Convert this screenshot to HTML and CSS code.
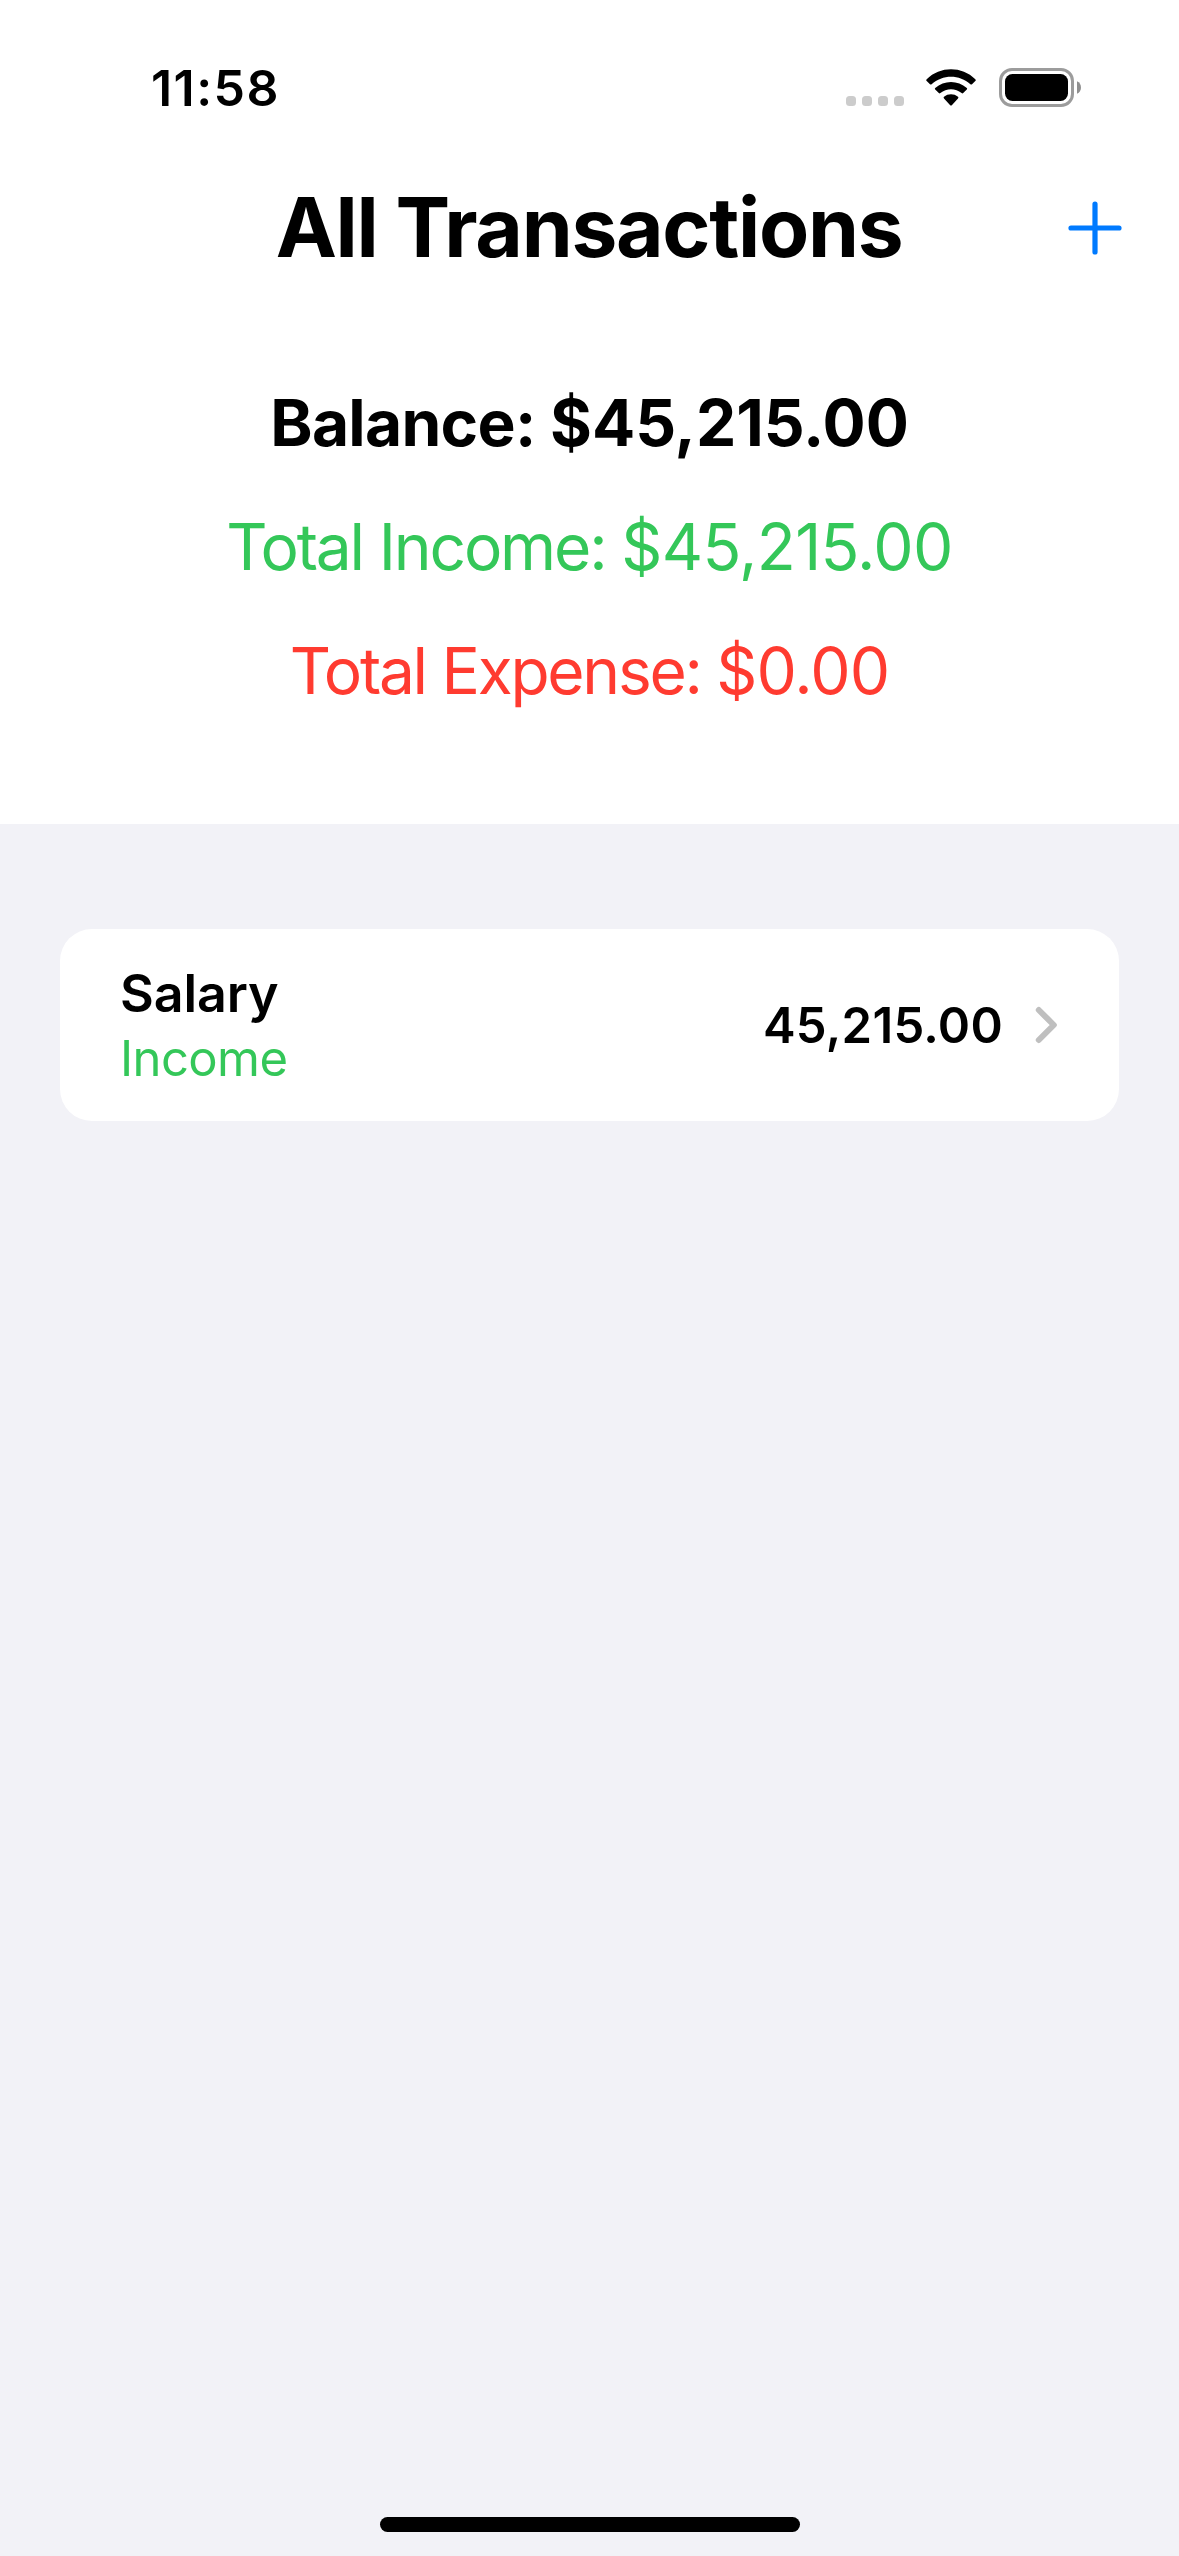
FILE: index.html
```html
<!DOCTYPE html>
<html lang="en">
<head>
<meta charset="utf-8">
<title>All Transactions</title>
<link rel="stylesheet" href="styles.css">
</head>
<body>
<div class="screen">
  <div class="status-bar">
    <span class="time">11:58</span>
    <div class="status-icons">
      <div class="signal"><i></i><i></i><i></i><i></i></div>
      <svg class="wifi" width="50" height="37" viewBox="0 0 50 37" aria-hidden="true">
        <path d="M0.7 10.2C14 -3.1 36 -3.1 49.3 10.2Q50.2 11.2 49.3 12.1L46 15.2Q45.2 15.9 44.4 15.2C33.5 5.2 16.5 5.2 5.6 15.2Q4.8 15.9 4 15.2L0.7 12.1Q-0.2 11.2 0.7 10.2Z"/>
        <path d="M9.2 19C18 10.9 32 10.9 40.8 19Q41.6 19.8 40.8 20.6L37.2 24.1Q36.4 24.8 35.6 24.1C29.6 18.9 20.4 18.9 14.4 24.1Q13.6 24.8 12.8 24.1L9.2 20.6Q8.4 19.8 9.2 19Z"/>
        <path d="M18 27.8C22 24.5 28 24.5 32 27.8Q32.9 28.6 32 29.5L25.8 36.2Q25 37 24.2 36.2L18 29.5Q17.1 28.6 18 27.8Z"/>
      </svg>
      <svg class="battery" width="83" height="39" viewBox="0 0 83 39" aria-hidden="true">
        <rect class="battery-case" x="1.5" y="1.5" width="72" height="36" rx="11.5"/>
        <rect x="6" y="6" width="63" height="27" rx="7.5"/>
        <path class="battery-tip" d="M78 13.2C83.3 15.2 83.3 23.8 78 25.8Z"/>
      </svg>
    </div>
  </div>

  <header class="header">
    <h1 class="title">All Transactions</h1>
    <svg class="add" width="54" height="54" viewBox="0 0 54 54" role="img" aria-label="Add">
      <path d="M3 27H51M27 3V51"/>
    </svg>
  </header>

  <section class="summary">
    <p class="balance">Balance: <span class="value">$45,215.00</span></p>
    <p class="income">Total Income: <span class="value">$45,215.00</span></p>
    <p class="expense">Total Expense: <span class="value">$0.00</span></p>
  </section>

  <main class="list">
    <div class="row">
      <div class="labels">
        <span class="name">Salary</span>
        <span class="kind">Income</span>
      </div>
      <span class="amount">45,215.00</span>
      <svg class="chevron" width="23" height="38" viewBox="0 0 23 38" aria-hidden="true">
        <path d="M3.8 4L18.8 19L3.8 34"/>
      </svg>
    </div>
    <div class="home-indicator"></div>
  </main>
</div>
</body>
</html>
```
FILE: styles.css
```css
* { box-sizing: border-box; margin: 0; padding: 0; }

body {
  font-family: Inter, "Liberation Sans", sans-serif;
  color: #000;
  background: #fff;
}

.screen {
  display: flex;
  flex-direction: column;
  width: 1179px;
  height: 2556px;
}

.status-bar {
  display: flex;
  justify-content: space-between;
  height: 141px;
  padding: 58px 97px 0 151px;
}

.time {
  font-size: 50px;
  line-height: 60px;
  font-weight: 600;
  letter-spacing: 1.46px;
}

.status-icons {
  display: flex;
  align-items: flex-start;
  padding-top: 10px;
}

.signal {
  display: flex;
  gap: 6px;
  margin: 28px 22px 0 0;
}

.signal i {
  width: 10px;
  height: 10px;
  border-radius: 3.5px;
  background: #ccc;
}

.wifi { margin: 1px 23px 0 0; }

.battery-case { fill: none; stroke: #9c9c9c; stroke-width: 3; }
.battery-tip { fill: #8f8f8f; }

.header {
  display: grid;
  grid-template-columns: 1fr auto 1fr;
  align-items: center;
  height: 173px;
  padding: 0 57px 0 56px;
}

.title {
  grid-column: 2;
  font-size: 82px;
  line-height: 100px;
  font-weight: 700;
  letter-spacing: -1.3px;
}

.add {
  justify-self: end;
  fill: none;
  stroke: #007aff;
  stroke-width: 5.2;
  stroke-linecap: round;
}

.summary {
  display: flex;
  flex-direction: column;
  gap: 44px;
  height: 510px;
  padding-top: 69px;
  text-align: center;
  font-size: 64px;
  line-height: 80px;
}

.balance { font-weight: 700; letter-spacing: -0.7px; }
.balance .value { letter-spacing: -0.05px; }
.income { color: #34c759; letter-spacing: -2.15px; }
.income .value { letter-spacing: -0.65px; }
.expense { color: #ff3b30; letter-spacing: -2.27px; }
.expense .value { letter-spacing: -0.9px; }

.list {
  display: flex;
  flex: 1;
  flex-direction: column;
  padding: 105px 60px 24px;
  background: #f2f2f7;
}

.row {
  display: flex;
  align-items: center;
  height: 192px;
  padding: 0 61px 0 60px;
  border-radius: 32px;
  background: #fff;
}

.labels {
  display: flex;
  flex: 1;
  flex-direction: column;
  padding-top: 2px;
}

.name {
  font-size: 52px;
  line-height: 66px;
  font-weight: 600;
  letter-spacing: -0.1px;
}

.kind {
  color: #34c759;
  font-size: 49px;
  line-height: 64px;
  letter-spacing: -0.6px;
}

.amount {
  margin-right: 32px;
  padding-top: 2px;
  font-size: 49px;
  line-height: 64px;
  font-weight: 600;
  letter-spacing: 0.27px;
}

.chevron {
  fill: none;
  stroke: #bfbfbf;
  stroke-width: 6;
  stroke-linecap: round;
  stroke-linejoin: round;
}

.home-indicator {
  align-self: center;
  width: 420px;
  height: 15px;
  margin-top: auto;
  border-radius: 8px;
  background: #000;
}
```
